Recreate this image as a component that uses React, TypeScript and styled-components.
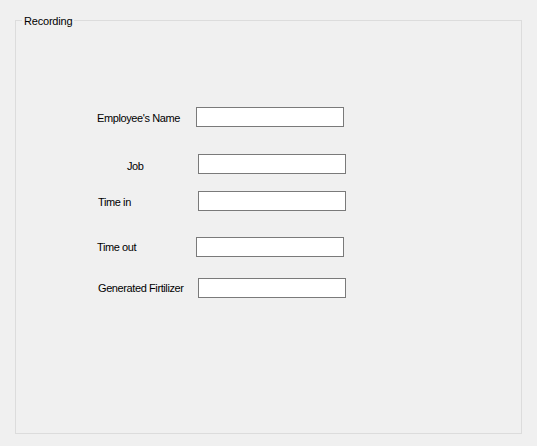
import * as React from "react";
import styled, { createGlobalStyle } from "styled-components";

const GlobalStyle = createGlobalStyle`
  html, body {
    margin: 0;
    padding: 0;
    background: #f0f0f0;
  }
  body {
    font-family: "Liberation Sans", Arial, sans-serif;
    font-size: 11px;
    color: #000;
  }
`;

const Window = styled.div`
  width: 537px;
  height: 446px;
  box-sizing: border-box;
  padding: 20px 0 0 15px;
  background: #f0f0f0;
`;

const GroupBox = styled.div`
  position: relative;
  width: 507px;
  height: 414px;
  box-sizing: border-box;
  border: 1px solid #dcdcdc;
  display: flex;
  flex-direction: column;
`;

const Caption = styled.span`
  position: absolute;
  top: -7px;
  left: 6px;
  padding: 0 2px;
  line-height: 14px;
  background: #f0f0f0;
  letter-spacing: -0.2px;
`;

const Row = styled.div<{ $gap: number }>`
  display: flex;
  align-items: center;
  height: 20px;
  margin-top: ${(p) => p.$gap}px;
`;

const Label = styled.label<{ $indent: number; $boxAt: number; $drop?: number }>`
  box-sizing: border-box;
  width: ${(p) => p.$boxAt}px;
  padding-left: ${(p) => p.$indent}px;
  padding-top: ${(p) => (p.$drop ?? 0) * 2}px;
  white-space: nowrap;
  letter-spacing: -0.4px;
  line-height: 14px;
`;

const TextBox = styled.input`
  width: 148px;
  height: 20px;
  box-sizing: border-box;
  margin: 0;
  padding: 0 3px;
  border: 1px solid #7a7a7a;
  background: #fff;
  font: inherit;
  outline: none;
`;

const fields = [
  { label: "Employee's Name", gap: 86, indent: 81, boxAt: 180, drop: 0.5 },
  { label: "Job", gap: 27, indent: 111, boxAt: 182, drop: 1.5 },
  { label: "Time in", gap: 17, indent: 82, boxAt: 182, drop: 1 },
  { label: "Time out", gap: 26, indent: 81, boxAt: 180, drop: 0 },
  { label: "Generated Firtilizer", gap: 21, indent: 82, boxAt: 182, drop: 0 },
];

export default function App() {
  return (
    <>
      <GlobalStyle />
      <Window>
        <GroupBox>
          <Caption>Recording</Caption>
          {fields.map((f) => (
            <Row key={f.label} $gap={f.gap}>
              <Label $indent={f.indent} $boxAt={f.boxAt} $drop={f.drop}>
                {f.label}
              </Label>
              <TextBox type="text" />
            </Row>
          ))}
        </GroupBox>
      </Window>
    </>
  );
}
